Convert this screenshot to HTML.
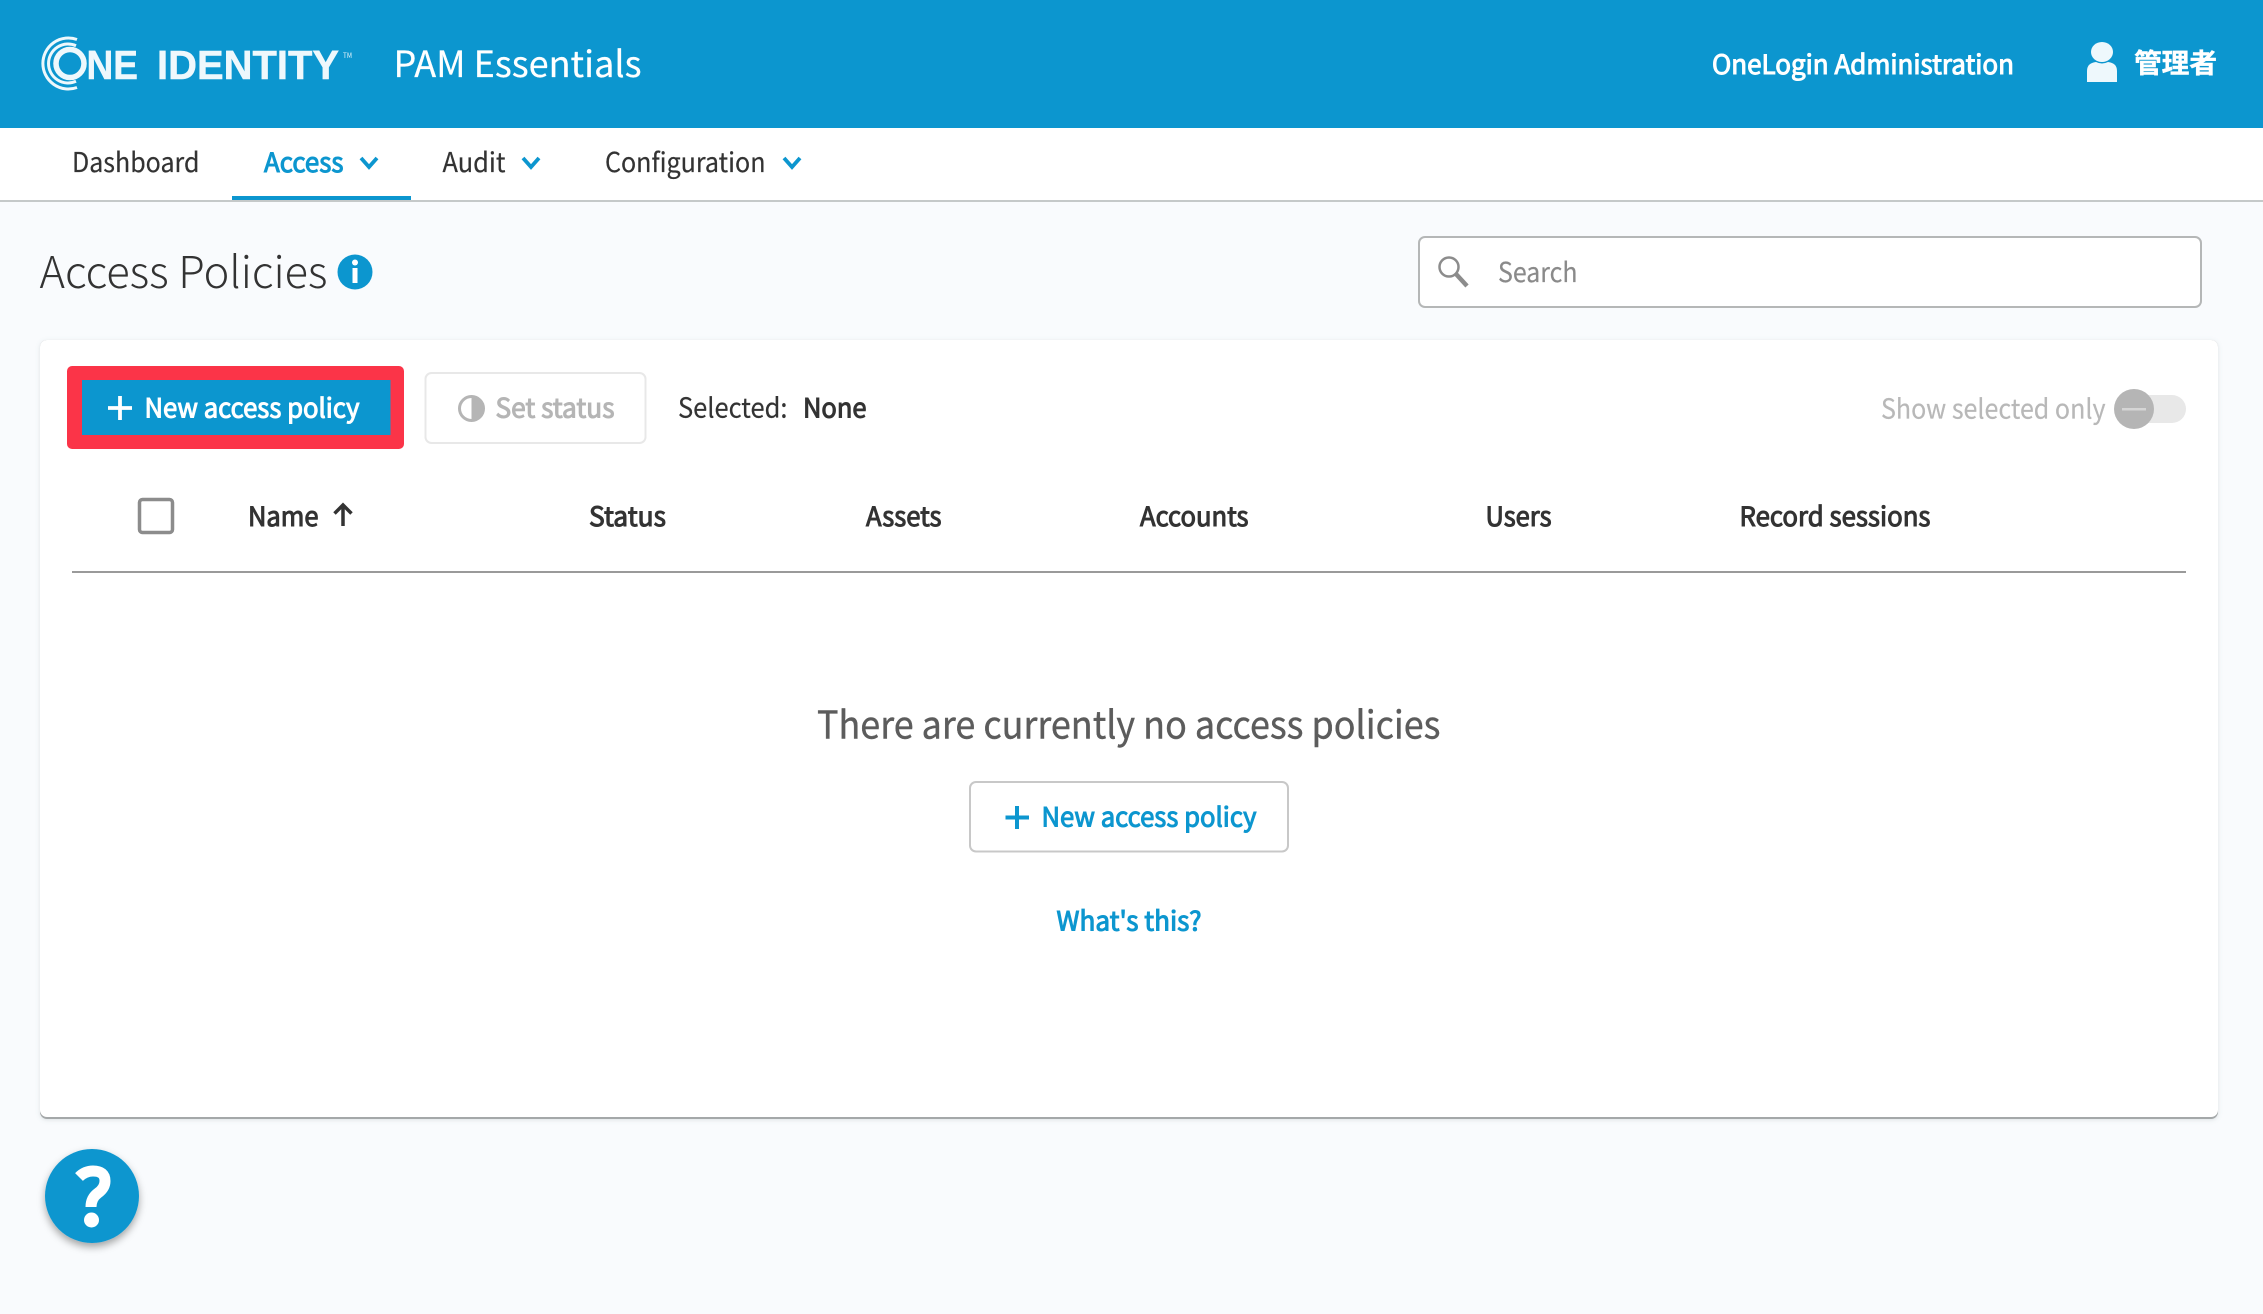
<!DOCTYPE html>
<html lang="en">
<head>
<meta charset="utf-8">
<title>Access Policies - PAM Essentials</title>
<style>
html,body{margin:0;padding:0;width:2263px;height:1314px;overflow:hidden;background:#f9fbfd}
svg{display:block}
text{font-family:"Noto Sans CJK JP","Liberation Sans",sans-serif;font-size:27px;fill:#333;stroke:#333;stroke-width:.2px}
.s{font-size:26.500px;stroke-width:1px}
.b{font-weight:700;stroke-width:0}
.blue{fill:#0c96cf;stroke:#0c96cf}
.w{fill:#fff;stroke:#fff}
.logo{font-family:"Liberation Sans",sans-serif;font-weight:700;fill:#eef8fc;stroke:#eef8fc;stroke-width:.5px;font-size:41px}
</style>
</head>
<body>
<svg width="2263" height="1314" viewBox="0 0 2263 1314" xmlns="http://www.w3.org/2000/svg">
<defs>
<filter id="sh" x="-30%" y="-30%" width="160%" height="170%"><feDropShadow dx="0" dy="4" stdDeviation="4" flood-color="#000" flood-opacity=".35"/></filter>
<filter id="cs" x="-2%" y="-2%" width="104%" height="104%"><feDropShadow dx="0" dy="1" stdDeviation="2" flood-color="#6a7a80" flood-opacity=".2"/></filter>
</defs>
<rect width="2263" height="1314" fill="#f9fbfd"/>

<!-- header -->
<rect width="2263" height="128" fill="#0c96cf"/>
<g fill="none" stroke="#eef8fc">
<circle cx="70" cy="63.500" r="14" stroke-width="5.500"/>
<path d="M77 39.500A25.500 25.500 0 1 0 77 87.500" stroke-width="3"/>
<path d="M76 45.700A19.500 19.500 0 1 0 76 81.300" stroke-width="3"/>
</g>
<text class="logo" x="86.500" y="79" textLength="51.500" lengthAdjust="spacingAndGlyphs">NE</text>
<text class="logo" x="157" y="79" textLength="182" lengthAdjust="spacingAndGlyphs">IDENTITY</text>
<text x="343" y="58" textLength="9" lengthAdjust="spacingAndGlyphs" style="font-size:7px;fill:#eef8fc;stroke-width:0">TM</text>
<text class="w" x="393.500" y="77" textLength="248" lengthAdjust="spacingAndGlyphs" style="font-size:36px">PAM Essentials</text>
<text class="w s" x="1712" y="74" textLength="302" lengthAdjust="spacingAndGlyphs">OneLogin Administration</text>
<g fill="#eef8fc">
<ellipse cx="2102" cy="52" rx="11" ry="10"/>
<path d="M2087 82V71Q2087 63 2096 62Q2102 65 2108 62Q2117 63 2117 71V82Z"/>
</g>
<text class="w b" x="2134" y="73" textLength="83" lengthAdjust="spacingAndGlyphs" style="font-size:27px;stroke-width:.4px">管理者</text>

<!-- nav -->
<rect y="128" width="2263" height="73" fill="#fff"/>
<rect y="200" width="2263" height="2" fill="#c5c9c9"/>
<rect x="232" y="196" width="179" height="4" fill="#0c96cf"/>
<text x="72" y="172" textLength="127.500" lengthAdjust="spacingAndGlyphs">Dashboard</text>
<text class="blue s" x="264" y="172" textLength="79.500" lengthAdjust="spacingAndGlyphs">Access</text>
<text x="442.500" y="172" textLength="63" lengthAdjust="spacingAndGlyphs">Audit</text>
<text x="605" y="172" textLength="160.500" lengthAdjust="spacingAndGlyphs">Configuration</text>
<g fill="none" stroke="#0c96cf" stroke-width="3.800">
<path d="M361 158L369 167L377 158"/>
<path d="M523 158L531 167L539 158"/>
<path d="M784 158L792 167L800 158"/>
</g>

<!-- title -->
<text x="39.500" y="288" textLength="288" lengthAdjust="spacingAndGlyphs" style="font-size:44px;font-weight:300;stroke-width:0">Access Policies</text>
<circle cx="355" cy="272" r="17.500" fill="#0c96cf"/>
<circle cx="355" cy="262.500" r="3" fill="#fff"/>
<rect x="352.500" y="268" width="5" height="15" fill="#fff"/>

<!-- search -->
<rect x="1419" y="237" width="782" height="70" rx="6" fill="#fff" stroke="#b5b7b7" stroke-width="2"/>
<circle cx="1449" cy="267" r="9.500" fill="none" stroke="#8c8c8c" stroke-width="2.500"/>
<path d="M1456 274L1467 286" stroke="#8c8c8c" stroke-width="4.500"/>
<text x="1498" y="282" textLength="79.500" lengthAdjust="spacingAndGlyphs" style="fill:#8a8a8a;stroke:#8a8a8a">Search</text>

<!-- card -->
<rect x="40" y="340" width="2178" height="779" rx="7" fill="#a4a8a9" filter="url(#cs)"/>
<rect x="40" y="340" width="2178" height="777" rx="7" fill="#fff"/>

<!-- toolbar -->
<rect x="67" y="366" width="337" height="83" rx="5" fill="#fb3448"/>
<rect x="82" y="380" width="308.500" height="55" fill="#0c96cf"/>
<path d="M120 396V420M108 408H132" stroke="#fff" stroke-width="3.800"/>
<text class="w s" x="144.500" y="417.500" textLength="215" lengthAdjust="spacingAndGlyphs">New access policy</text>

<rect x="425.500" y="373" width="220" height="70" rx="6" fill="#fff" stroke="#e8e8e8" stroke-width="2"/>
<circle cx="471.500" cy="408.500" r="12" fill="#fff" stroke="#b5b5b5" stroke-width="3"/>
<path d="M471.500 396A12.500 12.500 0 0 1 471.500 421Z" fill="#b5b5b5"/>
<text class="s" x="495.500" y="417.500" textLength="119" lengthAdjust="spacingAndGlyphs" style="fill:#b5b5b5;stroke:#b5b5b5">Set status</text>

<text x="678" y="417.500" textLength="109.500" lengthAdjust="spacingAndGlyphs">Selected:</text>
<text class="s" x="803" y="417.500" textLength="63.500" lengthAdjust="spacingAndGlyphs">None</text>

<text x="1881" y="418.500" textLength="224.500" lengthAdjust="spacingAndGlyphs" style="fill:#b8b8b8;stroke:#b8b8b8">Show selected only</text>
<rect x="2120" y="395" width="66" height="28" rx="14" fill="#e8e8e8"/>
<circle cx="2134" cy="409" r="20" fill="#b5b5b5"/>
<rect x="2122" y="408" width="24" height="2.500" fill="#d5d5d5"/>

<!-- table head -->
<rect x="139.500" y="499.500" width="33" height="33" rx="3" fill="#fff" stroke="#8c8c8c" stroke-width="3.500"/>
<text class="s" x="248" y="526" textLength="70.500" lengthAdjust="spacingAndGlyphs">Name</text>
<path d="M343 526V505M334.500 513.500L343 505L351.500 513.500" fill="none" stroke="#333" stroke-width="3.500"/>
<text class="s" x="589" y="526" textLength="77" lengthAdjust="spacingAndGlyphs">Status</text>
<text class="s" x="866" y="526" textLength="75.500" lengthAdjust="spacingAndGlyphs">Assets</text>
<text class="s" x="1140" y="526" textLength="108.500" lengthAdjust="spacingAndGlyphs">Accounts</text>
<text class="s" x="1485.500" y="526" textLength="66" lengthAdjust="spacingAndGlyphs">Users</text>
<text class="s" x="1739.500" y="526" textLength="191" lengthAdjust="spacingAndGlyphs">Record sessions</text>
<rect x="72" y="571" width="2114" height="2" fill="#9a9a9a"/>

<!-- empty state -->
<text x="817" y="738.500" textLength="623.500" lengthAdjust="spacingAndGlyphs" style="font-size:38px;fill:#5c5c5c;stroke:#5c5c5c;stroke-width:.4px">There are currently no access policies</text>
<rect x="970" y="782" width="318" height="69.500" rx="6" fill="#fff" stroke="#c8c8c8" stroke-width="2"/>
<path d="M1017 806V829M1005.500 817.500H1029" stroke="#0c96cf" stroke-width="4"/>
<text class="blue s" x="1041.500" y="826.500" textLength="215" lengthAdjust="spacingAndGlyphs">New access policy</text>
<text class="blue s" x="1056.500" y="930.500" textLength="145" lengthAdjust="spacingAndGlyphs">What's this?</text>

<!-- help -->
<circle cx="92" cy="1196" r="47" fill="#0c96cf" filter="url(#sh)"/>
<path d="M79 1177Q85 1171 93 1171Q105 1171 105 1181Q105 1188 98 1193Q91 1198 91 1207" fill="none" stroke="#fff" stroke-width="11"/>
<circle cx="91.500" cy="1220" r="7.500" fill="#fff"/>
</svg>
</body>
</html>
